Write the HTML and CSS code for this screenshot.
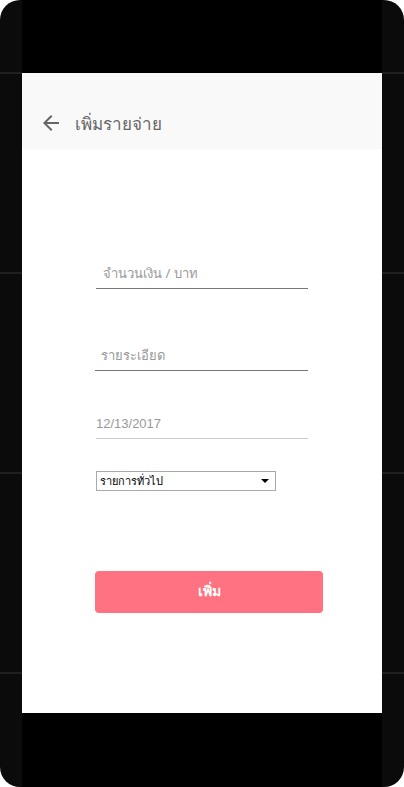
FILE: index.html
```html
<!DOCTYPE html>
<html lang="th">
<head>
<meta charset="utf-8">
<link rel="stylesheet" href="styles.css">
</head>
<body>
<div class="phone">
  <div class="screen">
    <div class="status"></div>
    <div class="header">
      <svg class="back" viewBox="0 0 24 24" width="24" height="24"><path d="M20 11H7.83l5.59-5.59L12 4l-8 8 8 8 1.41-1.41L7.83 13H20v-2z" fill="#666"/></svg>
      <span class="title">เพิ่มรายจ่าย</span>
    </div>
    <div class="content">
      <div class="field f1"><span class="ph">จำนวนเงิน / บาท</span></div>
      <div class="field f2"><span class="ph">รายระเอียด</span></div>
      <div class="field f3"><span class="date">12/13/2017</span></div>
      <div class="select"><span>รายการทั่วไป</span><span class="caret"></span></div>
      <div class="btn">เพิ่ม</div>
    </div>
    <div class="navbar"></div>
  </div>
</div>
</body>
</html>
```
FILE: styles.css
```css
html, body { margin: 0; padding: 0; background: #fff; }
body { font-family: "Noto Sans", "DejaVu Sans", sans-serif; }
.phone {
  width: 404px; height: 787px; box-sizing: border-box;
  padding: 0 22px;
  border-radius: 20px;
  background-color: #0b0b0b;
  background-image: repeating-linear-gradient(to bottom, transparent 0, transparent 72px, #1f1f1f 72px, #1f1f1f 74px, transparent 74px, transparent 200px);
  display: flex;
}
.screen { flex: 1; display: flex; flex-direction: column; }
.status { height: 73px; background: #000; }
.header {
  height: 76px; box-sizing: border-box; background: #f9f9f9;
  display: flex; align-items: center;
  padding: 24px 0 0 17px; gap: 12px;
}
.back { display: block; }
.title { font-size: 17px; color: #666; font-weight: 300; }
.content {
  flex: 1; background: #fff;
  display: flex; flex-direction: column; align-items: flex-start;
  padding-left: 74px;
}
.field {
  width: 212px; height: 18px; padding-bottom: 6px;
  border-bottom: 1px solid #777;
  display: flex; align-items: center; box-sizing: content-box;
  font-size: 13px;
}
.f1 { margin-top: 115px; padding-left: 7px; width: 205px; }
.f2 { margin-top: 57px; margin-left: -1px; padding-left: 6px; width: 207px; }
.f3 { margin-top: 43px; border-bottom-color: #ccc; }
.ph { color: #999; }
.date { color: #999; font-family: "Liberation Sans", sans-serif; font-size: 13px; }
.select {
  margin-top: 32px; height: 18px;
  border: 1px solid #a9a9a9;
  display: flex; align-items: center; justify-content: space-between;
  padding: 0 4px 0 3px; box-sizing: content-box;
  font-size: 11px; color: #000;
  width: 171px;
}
.caret {
  width: 0; height: 0;
  border-left: 4px solid transparent; border-right: 4px solid transparent;
  border-top: 4px solid #000;
  margin-right: 2px;
}
.btn {
  margin-top: 80px; margin-left: -1px;
  width: 228px; height: 42px; box-sizing: border-box; padding-bottom: 3px;
  border-radius: 4px;
  background: #ff7282; color: #fff;
  display: flex; align-items: center; justify-content: center;
  font-size: 14px; font-weight: bold;
}
.navbar { height: 74px; background: #000; }
```
